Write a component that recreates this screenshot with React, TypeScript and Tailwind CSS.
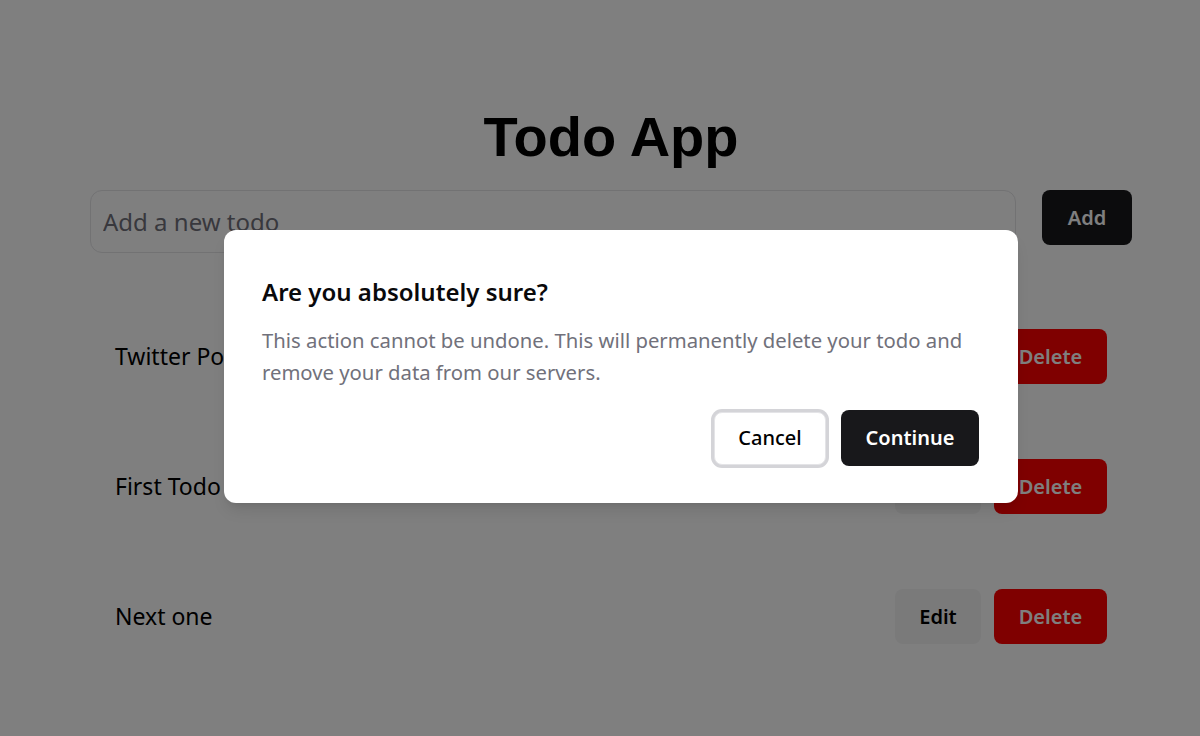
const todos = [
  { id: 1, text: 'Twitter Post' },
  { id: 2, text: 'First Todo' },
  { id: 3, text: 'Next one' },
]

const sans = "font-['Noto_Sans',sans-serif]"

function TodoRow({ text }: { text: string }) {
  return (
    <div className="flex h-[105px] items-center justify-between rounded-lg px-[25px]">
      <span className="text-[23px] text-black">{text}</span>
      <div className="flex items-center gap-[13px]">
        <button
          type="button"
          className="h-[55px] w-[86px] rounded-lg bg-zinc-100 text-[20px] font-semibold text-black"
        >
          Edit
        </button>
        <button
          type="button"
          className="h-[55px] w-[113px] rounded-lg bg-[#ff0000] text-[20px] font-semibold text-white"
        >
          Delete
        </button>
      </div>
    </div>
  )
}

export default function App() {
  return (
    <div className={`relative min-h-[736px] bg-white ${sans}`}>
      <div className="pl-[90px] pr-[68px] pt-[101px]">
        <h1 className="text-center font-['Liberation_Sans',Arial,sans-serif] text-[56px] font-bold leading-[72px] text-black">
          Todo App
        </h1>
        <div className="mt-[17px] flex items-start gap-[26px]">
          <input
            className="h-[63px] flex-1 rounded-xl border border-zinc-200 px-3 text-[24px] placeholder:text-zinc-500"
            placeholder="Add a new todo"
          />
          <button
            type="button"
            className="h-[55px] w-[90px] rounded-lg bg-[#18181b] text-[20px] font-semibold text-white"
          >
            Add
          </button>
        </div>
        <div className="mt-[51px] flex flex-col gap-[25px]">
          {todos.map((t) => (
            <TodoRow key={t.id} text={t.text} />
          ))}
        </div>
      </div>

      <div className="absolute inset-0 bg-black/50">
        <div className="absolute left-[224px] top-[230px] w-[794px] rounded-xl bg-white pb-[37px] pl-[38px] pr-[39px] pt-[46px] shadow-lg">
          <h2 className="text-[24px] font-semibold leading-[32px] text-zinc-950">
            Are you absolutely sure?
          </h2>
          <p className="mt-[16px] text-[20.3px] leading-[32px] text-zinc-500">
            This action cannot be undone. This will permanently delete your todo and remove your data from our servers.
          </p>
          <div className="mt-[22px] flex items-center justify-end gap-[15px]">
            <button
              type="button"
              className="h-[53px] w-[112px] rounded-lg border border-zinc-200 bg-white text-[20px] font-medium text-black ring-[3px] ring-zinc-300"
            >
              Cancel
            </button>
            <button
              type="button"
              className="h-[56px] w-[138px] rounded-lg bg-[#18181b] text-[20px] font-semibold text-white"
            >
              Continue
            </button>
          </div>
        </div>
      </div>
    </div>
  )
}
